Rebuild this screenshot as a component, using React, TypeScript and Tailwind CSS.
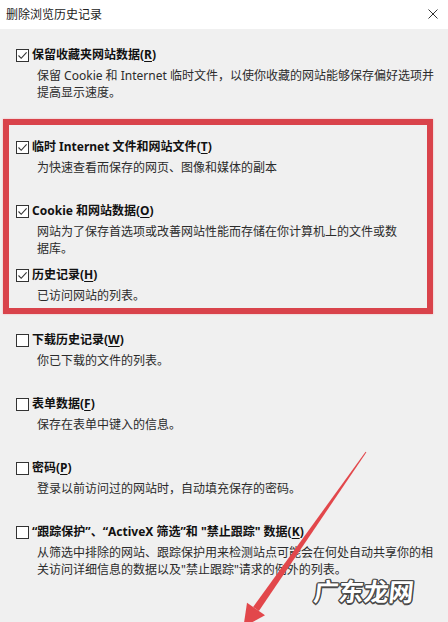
import React from "react";

type Item = {
  label: React.ReactNode;
  desc: React.ReactNode;
  checked: boolean;
};

const Key: React.FC<{ k: string }> = ({ k }) => (
  <>
    (<span className="underline underline-offset-2">{k}</span>)
  </>
);

const Box: React.FC<{ checked: boolean }> = ({ checked }) => (
  <span className="w-[13px] h-[13px] shrink-0 border border-[#333] bg-white flex items-center justify-center">
    {checked && (
      <svg width="11" height="11" viewBox="0 0 11 11">
        <path d="M1.5 5.5 L4.2 8.3 L9.6 2.4" fill="none" stroke="#333" strokeWidth="1.1" />
      </svg>
    )}
  </span>
);

const Row: React.FC<{ item: Item; h?: string }> = ({ item, h }) => (
  <div className={h}>
    <div className="flex items-center h-[20px] gap-[3px]">
      <Box checked={item.checked} />
      <span className="font-bold text-[#111] whitespace-nowrap">{item.label}</span>
    </div>
    <div className="mt-[2px] ml-[21px] leading-[17px] text-[#2b2b2b] whitespace-nowrap">{item.desc}</div>
  </div>
);

const first: Item = {
  checked: true,
  label: <>保留收藏夹网站数据<Key k="R" /></>,
  desc: <>保留 Cookie 和 Internet 临时文件，以使你收藏的网站能够保存偏好选项并<br />提高显示速度。</>,
};

const boxed: Item[] = [
  {
    checked: true,
    label: <>临时 Internet 文件和网站文件<Key k="T" /></>,
    desc: <>为快速查看而保存的网页、图像和媒体的副本</>,
  },
  {
    checked: true,
    label: <>Cookie 和网站数据<Key k="O" /></>,
    desc: <>网站为了保存首选项或改善网站性能而存储在你计算机上的文件或数<br />据库。</>,
  },
  {
    checked: true,
    label: <>历史记录<Key k="H" /></>,
    desc: <>已访问网站的列表。</>,
  },
];

const rest: Item[] = [
  {
    checked: false,
    label: <>下载历史记录<Key k="W" /></>,
    desc: <>你已下载的文件的列表。</>,
  },
  {
    checked: false,
    label: <>表单数据<Key k="F" /></>,
    desc: <>保存在表单中键入的信息。</>,
  },
  {
    checked: false,
    label: <>密码<Key k="P" /></>,
    desc: <>登录以前访问过的网站时，自动填充保存的密码。</>,
  },
  {
    checked: false,
    label: <>“跟踪保护”、“ActiveX 筛选”和 "禁止跟踪" 数据<Key k="K" /></>,
    desc: <>从筛选中排除的网站、跟踪保护用来检测站点可能会在何处自动共享你的相<br />关访问详细信息的数据以及"禁止跟踪"请求的例外的列表。</>,
  },
];

export default function App() {
  return (
    <div className="relative w-[448px] h-[622px] overflow-hidden bg-[#f0f0f0] text-[12px] text-[#111] font-['Noto_Sans','Noto_Sans_CJK_SC',sans-serif]">
      <div className="h-[29px] bg-white flex items-center justify-between pl-[6px] pr-[10px]">
        <span className="text-[12px] text-[#222]">删除浏览历史记录</span>
        <svg width="10" height="10" viewBox="0 0 10 10" className="mt-[-1px]">
          <path d="M0.5 0.5 L9.5 9.5 M9.5 0.5 L0.5 9.5" stroke="#333" strokeWidth="1" />
        </svg>
      </div>

      <div className="pt-[16px] pl-[16px]">
        <Row item={first} />
      </div>

      <div className="mt-[18px] ml-[3px] w-[430px] h-[195px] border-[6px] border-[#d9434b] shadow-[0_0_2px_#f2b0b3] pt-[12px] pl-[7px]">
        {boxed.map((it, i) => (
          <Row key={i} item={it} h={i < boxed.length - 1 ? "h-[64px]" : ""} />
        ))}
      </div>

      <div className="pt-[16px] pl-[16px]">
        {rest.map((it, i) => (
          <Row key={i} item={it} h="h-[64px]" />
        ))}
      </div>

      <svg className="absolute left-0 top-0 pointer-events-none" width="448" height="622" viewBox="0 0 448 622">
        <polygon
          points="366.4,452.3 365.6,451.7 253.1,607 258.9,611"
          fill="#e2474b"
        />
        <polygon points="265,615.3 247,602.7 243.4,627" fill="#e2474b" />
      </svg>

      <div className="absolute left-[314px] top-[574px] text-[25px] font-bold leading-[32px] text-white -skew-x-6 [text-shadow:1.5px_0_0_#4a4a4a,-1.5px_0_0_#4a4a4a,0_1.5px_0_#4a4a4a,0_-1.5px_0_#4a4a4a,1px_1px_0_#4a4a4a,-1px_-1px_0_#4a4a4a,1px_-1px_0_#4a4a4a,-1px_1px_0_#4a4a4a] font-['Noto_Sans_CJK_SC',sans-serif]">
        广东龙网
      </div>
    </div>
  );
}
